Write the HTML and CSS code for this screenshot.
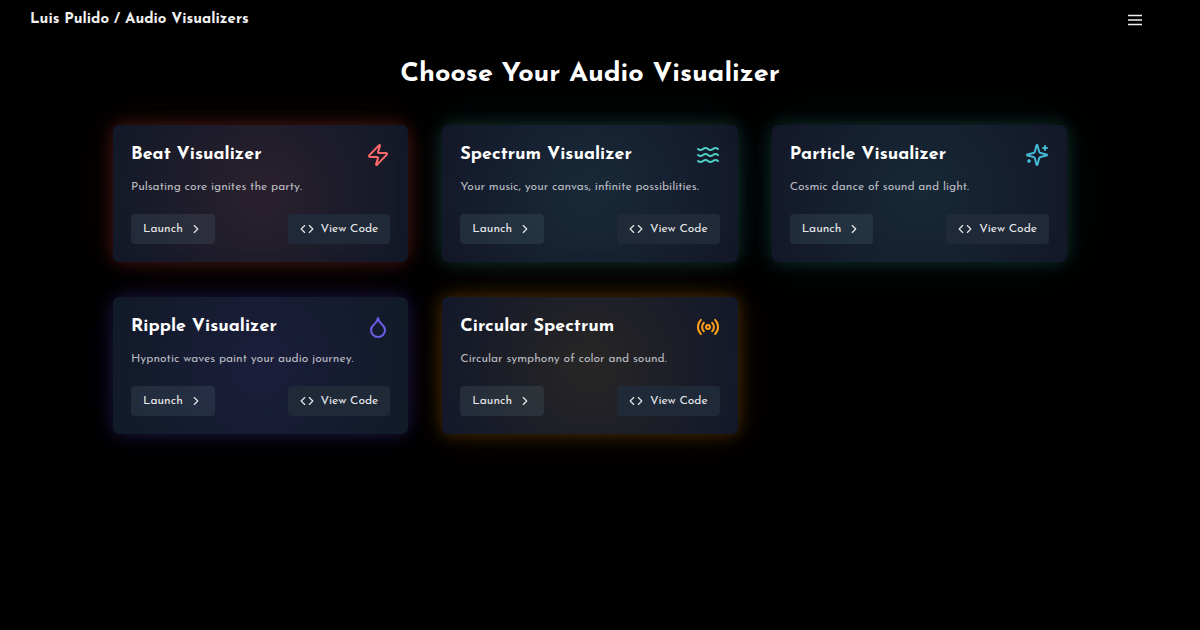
FILE: index.html
```html
<!DOCTYPE html>
<html lang="en">
<head>
<meta charset="utf-8">
<meta name="viewport" content="width=device-width, initial-scale=1">
<title>Audio Visualizers</title>
<link rel="stylesheet" href="styles.css">
</head>
<body>
<svg class="sprite" aria-hidden="true">
  <symbol id="chevron" viewBox="0 0 24 24"><path d="m9 18 6-6-6-6"/></symbol>
  <symbol id="code" viewBox="0 0 24 24"><path d="m16 18 6-6-6-6"/><path d="m8 6-6 6 6 6"/></symbol>
</svg>
<header class="navbar">
  <a class="brand" href="#">Luis Pulido / Audio Visualizers</a>
  <button class="menu" type="button" aria-label="Menu">
    <svg class="menu-icon" viewBox="0 0 14 12"><path d="M0 1.5h14M0 6h14M0 10.5h14"/></svg>
  </button>
</header>
<main class="content">
  <h1 class="title">Choose Your Audio Visualizer</h1>
  <div class="grid">
    <article class="card beat">
      <div class="card-head">
        <h2 class="card-title">Beat Visualizer</h2>
        <svg class="icon" viewBox="0 0 24 24"><path d="M4 14a1 1 0 0 1-.78-1.63l9.9-10.2a.5.5 0 0 1 .86.46l-1.92 6.02A1 1 0 0 0 13 10h7a1 1 0 0 1 .78 1.63l-9.9 10.2a.5.5 0 0 1-.86-.46l1.92-6.02A1 1 0 0 0 11 14z"/></svg>
      </div>
      <p class="desc">Pulsating core ignites the party.</p>
      <div class="actions">
        <a class="btn" href="#beat">Launch <svg class="btn-icon after"><use href="#chevron"/></svg></a>
        <a class="btn view" href="#beat-code"><svg class="btn-icon before"><use href="#code"/></svg> View Code</a>
      </div>
    </article>
    <article class="card spectrum">
      <div class="card-head">
        <h2 class="card-title">Spectrum Visualizer</h2>
        <svg class="icon" viewBox="0 0 24 24"><path d="M2 6c.6.5 1.2 1 2.5 1C7 7 7 5 9.500 5c2.600 0 2.400 2 5 2 2.500 0 2.500-2 5-2 1.300 0 1.900.5 2.500 1"/><path d="M2 12c.6.5 1.200 1 2.500 1 2.500 0 2.500-2 5-2 2.600 0 2.400 2 5 2 2.500 0 2.500-2 5-2 1.300 0 1.900.5 2.500 1"/><path d="M2 18c.6.5 1.200 1 2.500 1 2.500 0 2.500-2 5-2 2.600 0 2.400 2 5 2 2.500 0 2.500-2 5-2 1.300 0 1.900.5 2.500 1"/></svg>
      </div>
      <p class="desc">Your music, your canvas, infinite possibilities.</p>
      <div class="actions">
        <a class="btn" href="#spectrum">Launch <svg class="btn-icon after"><use href="#chevron"/></svg></a>
        <a class="btn view" href="#spectrum-code"><svg class="btn-icon before"><use href="#code"/></svg> View Code</a>
      </div>
    </article>
    <article class="card particle">
      <div class="card-head">
        <h2 class="card-title">Particle Visualizer</h2>
        <svg class="icon" viewBox="0 0 24 24"><path d="M9.937 15.500A2 2 0 0 0 8.500 14.063l-6.135-1.582a.5.5 0 0 1 0-.962L8.500 9.936A2 2 0 0 0 9.937 8.500l1.582-6.135a.5.5 0 0 1 .963 0L14.063 8.500A2 2 0 0 0 15.500 9.937l6.135 1.581a.5.5 0 0 1 0 .964L15.500 14.063a2 2 0 0 0-1.437 1.437l-1.582 6.135a.5.5 0 0 1-.963 0z"/><path d="M20 3v4M22 5h-4M4 17v2M5 18H3"/></svg>
      </div>
      <p class="desc">Cosmic dance of sound and light.</p>
      <div class="actions">
        <a class="btn" href="#particle">Launch <svg class="btn-icon after"><use href="#chevron"/></svg></a>
        <a class="btn view" href="#particle-code"><svg class="btn-icon before"><use href="#code"/></svg> View Code</a>
      </div>
    </article>
    <article class="card ripple">
      <div class="card-head">
        <h2 class="card-title">Ripple Visualizer</h2>
        <svg class="icon" viewBox="0 0 24 24"><path d="M12 22a7 7 0 0 0 7-7c0-2-1-3.900-3-5.500s-3.500-4-4-6.500c-.5 2.500-2 4.900-4 6.500C6 11.100 5 13 5 15a7 7 0 0 0 7 7z"/></svg>
      </div>
      <p class="desc">Hypnotic waves paint your audio journey.</p>
      <div class="actions">
        <a class="btn" href="#ripple">Launch <svg class="btn-icon after"><use href="#chevron"/></svg></a>
        <a class="btn view" href="#ripple-code"><svg class="btn-icon before"><use href="#code"/></svg> View Code</a>
      </div>
    </article>
    <article class="card circular">
      <div class="card-head">
        <h2 class="card-title">Circular Spectrum</h2>
        <svg class="icon" viewBox="0 0 24 24"><path d="M4.900 19.100C1 15.200 1 8.800 4.900 4.900"/><path d="M7.800 16.200c-2.300-2.300-2.300-6.100 0-8.500"/><circle cx="12" cy="12" r="2"/><path d="M16.200 7.800c2.300 2.300 2.300 6.100 0 8.500"/><path d="M19.100 4.900C23 8.800 23 15.100 19.100 19"/></svg>
      </div>
      <p class="desc">Circular symphony of color and sound.</p>
      <div class="actions">
        <a class="btn" href="#circular">Launch <svg class="btn-icon after"><use href="#chevron"/></svg></a>
        <a class="btn view" href="#circular-code"><svg class="btn-icon before"><use href="#code"/></svg> View Code</a>
      </div>
    </article>
  </div>
</main>
</body>
</html>
```

FILE: styles.css
```css
* { box-sizing: border-box; }

body {
  margin: 0;
  min-height: 100vh;
  padding-right: 20px;
  background: #000;
  color: #fff;
  font-family: "Josefin Sans", Lato, sans-serif;
}

.sprite { display: none; }

svg {
  fill: none;
  stroke: currentColor;
  stroke-width: 2;
  stroke-linecap: round;
  stroke-linejoin: round;
}

.navbar {
  display: flex;
  align-items: center;
  justify-content: space-between;
  height: 40px;
  padding: 0 38px 0 30px;
}

.brand {
  color: #f0f0f0;
  font-size: 15px;
  font-weight: 700;
  line-height: 20px;
  text-decoration: none;
}

.menu {
  display: flex;
  padding: 0;
  border: 0;
  background: none;
  color: #f0f0f0;
  cursor: pointer;
}

.menu-icon {
  width: 14px;
  height: 12px;
  stroke-width: 1.5;
  stroke-linecap: butt;
}

.content {
  max-width: 994px;
  margin: 0 auto;
  padding: 15px 20px 40px;
}

.title {
  margin: 0 0 30px;
  font-size: 27px;
  font-weight: 700;
  line-height: 40px;
  text-align: center;
}

.grid {
  display: grid;
  grid-template-columns: repeat(auto-fill, minmax(280px, 1fr));
  gap: 35px 34px;
}

.card {
  padding: 18px;
  border-radius: 6px;
  background: radial-gradient(circle, var(--core), var(--edge));
  box-shadow: 0 0 18px var(--glow), 0 0 56px var(--haze);
}

.beat { --core: #2a202d; --edge: #111827; --glow: #ff5a4a44; --haze: #ff5a3a14; --accent: #ff6b6b; }
.spectrum { --core: #182a38; --edge: #131728; --glow: #4ecda43c; --haze: #4ea8cd14; --accent: #4ecdc4; }
.particle { --core: #172936; --edge: #131728; --glow: #45d1b738; --haze: #45b7d114; --accent: #45b7d1; }
.ripple { --core: #1b1e3c; --edge: #111a27; --glow: #6c4ce744; --haze: #6c5ce714; --accent: #6c5ce7; }
.circular { --core: #282625; --edge: #12182a; --glow: #ff9f0048; --haze: #ff7f1c14; --accent: #ff9f1c; }

.card-head {
  display: flex;
  align-items: center;
  justify-content: space-between;
}

.card-title {
  margin: 0;
  font-size: 18px;
  font-weight: 700;
  line-height: 24px;
}

.icon {
  width: 24px;
  height: 24px;
  color: var(--accent);
}

.desc {
  margin: 10px 0 17px;
  color: #b8bac0;
  font-size: 12px;
  line-height: 20px;
}

.actions {
  display: flex;
  justify-content: space-between;
}

.btn {
  display: flex;
  align-items: center;
  height: 30px;
  padding: 0 12px;
  border-radius: 4px;
  background: rgba(140, 180, 190, 0.12);
  color: #e8e8ea;
  font-size: 12px;
  line-height: 20px;
  text-decoration: none;
}

.view { background: #1f2937; }

.btn-icon { width: 14px; height: 14px; }
.after { margin-left: 6px; }
.before { margin-right: 7px; }
```
